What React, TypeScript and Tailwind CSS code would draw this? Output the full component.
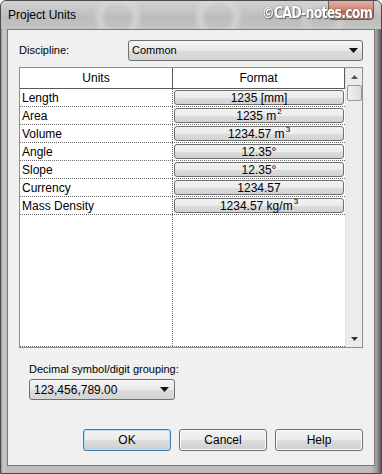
import React from "react";

function Sup({ c }: { c: string }) {
  return <span className="text-[8px] relative -top-[4px] ml-[1px]">{c}</span>;
}

const rows: { name: string; fmt: React.ReactNode }[] = [
  { name: "Length", fmt: <>1235 [mm]</> },
  { name: "Area", fmt: <>1235 m<Sup c="2" /></> },
  { name: "Volume", fmt: <>1234.57 m<Sup c="3" /></> },
  { name: "Angle", fmt: <>12.35°</> },
  { name: "Slope", fmt: <>12.35°</> },
  { name: "Currency", fmt: <>1234.57</> },
  { name: "Mass Density", fmt: <>1234.57 kg/m<Sup c="3" /></> },
];

function Arrow() {
  return (
    <svg width="9" height="5" viewBox="0 0 9 5">
      <path d="M0 0 H9 L4.5 5 Z" fill="#111" />
    </svg>
  );
}

function Btn({ label, focused }: { label: string; focused?: boolean }) {
  return (
    <div
      className={
        "w-[88px] h-[22px] rounded-[3px] flex items-center justify-center text-[12px] text-black bg-[linear-gradient(#f3f3f3_0%,#ebebeb_50%,#dddddd_51%,#cfcfcf_100%)] " +
        (focused
          ? "border border-[#3c7fb1] shadow-[inset_0_0_0_1px_#b6dbf2]"
          : "border border-[#707070] shadow-[inset_0_0_0_1px_#fbfbfb]")
      }
    >
      {label}
    </div>
  );
}

export default function App() {
  return (
    <div
      className="w-[382px] h-[474px] flex flex-col overflow-hidden bg-[linear-gradient(90deg,#8f8f8f_0px,#c9c9c9_2px,#bdbdbd_6px,#bdbdbd_370px,#9a9a9a_376px,#5c5c5c_380px,#8a8a8a_382px)] rounded-t-[6px] border border-[#4a4a4a]"
      style={{ fontFamily: '"Liberation Sans", Arial, sans-serif' }}
    >
      {/* title bar */}
      <div className="relative h-[28px] shrink-0 flex items-center pl-[7px] bg-[linear-gradient(#d2d2d2,#bcbcbc_60%,#c4c4c4)] overflow-hidden">
        <div className="absolute left-[95px] top-[-6px] w-[44px] h-[44px] rounded-full border-[7px] border-[#d9d9d9] opacity-70 blur-[2px]" />
        <div className="absolute left-[195px] top-[-6px] w-[44px] h-[44px] rounded-full border-[7px] border-[#d9d9d9] opacity-70 blur-[2px]" />
        <div className="absolute left-[300px] top-[-6px] w-[44px] h-[44px] rounded-full border-[7px] border-[#d9d9d9] opacity-50 blur-[2px]" />
        <span className="relative text-[12px] text-black">Project Units</span>
        <div className="absolute right-[7px] top-[-1px] w-[46px] h-[20px] rounded-b-[4px] border border-[#6b3b3b] bg-[linear-gradient(#e8a89c,#d2705e_50%,#c0432f_55%,#d8866f)] opacity-80" />
        <span
          className="absolute right-[9px] top-[3px] text-[14px] leading-[16px] font-bold text-white tracking-[-0.8px] [text-shadow:0_0_1px_#444,1px_1px_1px_#666] scale-y-110"
          style={{ fontFamily: '"DejaVu Sans Condensed", "Liberation Sans Narrow", sans-serif' }}
        >
          ©CAD-notes.com
        </span>
      </div>

      {/* client */}
      <div className="mx-[6px] h-[437px] shrink-0 bg-[#f0f0f0] border border-[#7a7a7a] flex flex-col pt-[10px] pl-[11px] pr-[11px]">
        {/* discipline */}
        <div className="flex items-center h-[21px]">
          <span className="w-[109px] text-[11px] text-black">Discipline:</span>
          <div className="flex-1 h-[21px] rounded-[3px] border border-[#707070] bg-[linear-gradient(#f5f5f5,#e8e8e8_50%,#dcdcdc_51%,#d4d4d4)] flex items-center pl-[3px] pr-[4px] text-[11px] text-black">
            <span className="flex-1">Common</span>
            <Arrow />
          </div>
        </div>

        {/* table */}
        <div className="mt-[6px] h-[281px] border border-[#8e8e8e] bg-white flex">
          <div className="flex-1 flex flex-col">
            <div className="h-[21px] shrink-0 flex border-b border-[#5a5a5a] text-[12px] text-black">
              <div className="w-[153px] flex items-center justify-center border-r border-[#5a5a5a]">Units</div>
              <div className="flex-1 flex items-center justify-center border-r border-[#5a5a5a]">Format</div>
            </div>
            <div className="flex-1 flex flex-col border-b border-dotted border-[#6a6a6a]">
              {rows.map((r) => (
                <div key={r.name} className="h-[18px] shrink-0 flex border-b border-dotted border-[#6a6a6a] text-[12px] text-black">
                  <div className="w-[153px] pl-[2px] flex items-center border-r border-dotted border-[#6a6a6a]">{r.name}</div>
                  <div className="flex-1 px-[1px] py-[1px] flex">
                    <div className="flex-1 rounded-[3px] border border-[#6f6f6f] bg-[linear-gradient(#f3f3f3,#ebebeb_50%,#dddddd_51%,#d2d2d2)] flex items-center justify-center leading-none">
                      {r.fmt}
                    </div>
                  </div>
                </div>
              ))}
              <div className="flex-1 flex">
                <div className="w-[153px] border-r border-dotted border-[#6a6a6a]" />
              </div>
            </div>
          </div>
          {/* scrollbar */}
          <div className="w-[17px] bg-[#ececec] border-l border-[#e2e2e2] flex flex-col items-center">
            <div className="h-[17px] flex items-center justify-center">
              <svg width="7" height="4" viewBox="0 0 7 4"><path d="M0 4 H7 L3.5 0 Z" fill="#555" /></svg>
            </div>
            <div className="w-[15px] h-[16px] rounded-[2px] border border-[#9a9a9a] bg-[linear-gradient(90deg,#f2f2f2,#dcdcdc)]" />
            <div className="flex-1" />
            <div className="h-[17px] flex items-center justify-center">
              <svg width="7" height="4" viewBox="0 0 7 4"><path d="M0 0 H7 L3.5 4 Z" fill="#333" /></svg>
            </div>
          </div>
        </div>

        {/* decimal */}
        <div className="mt-[14px] pl-[10px] text-[11px] text-black leading-[14px]">Decimal symbol/digit grouping:</div>
        <div className="ml-[10px] mt-[3px] w-[146px] h-[21px] rounded-[3px] border border-[#707070] bg-[linear-gradient(#f5f5f5,#e8e8e8_50%,#dcdcdc_51%,#d4d4d4)] flex items-center pl-[4px] pr-[5px] text-[12px] text-black">
          <span className="flex-1">123,456,789.00</span>
          <Arrow />
        </div>

        {/* buttons */}
        <div className="mt-[29px] flex justify-end gap-[8px]">
          <Btn label="OK" focused />
          <Btn label="Cancel" />
          <Btn label="Help" />
        </div>
      </div>
    </div>
  );
}
